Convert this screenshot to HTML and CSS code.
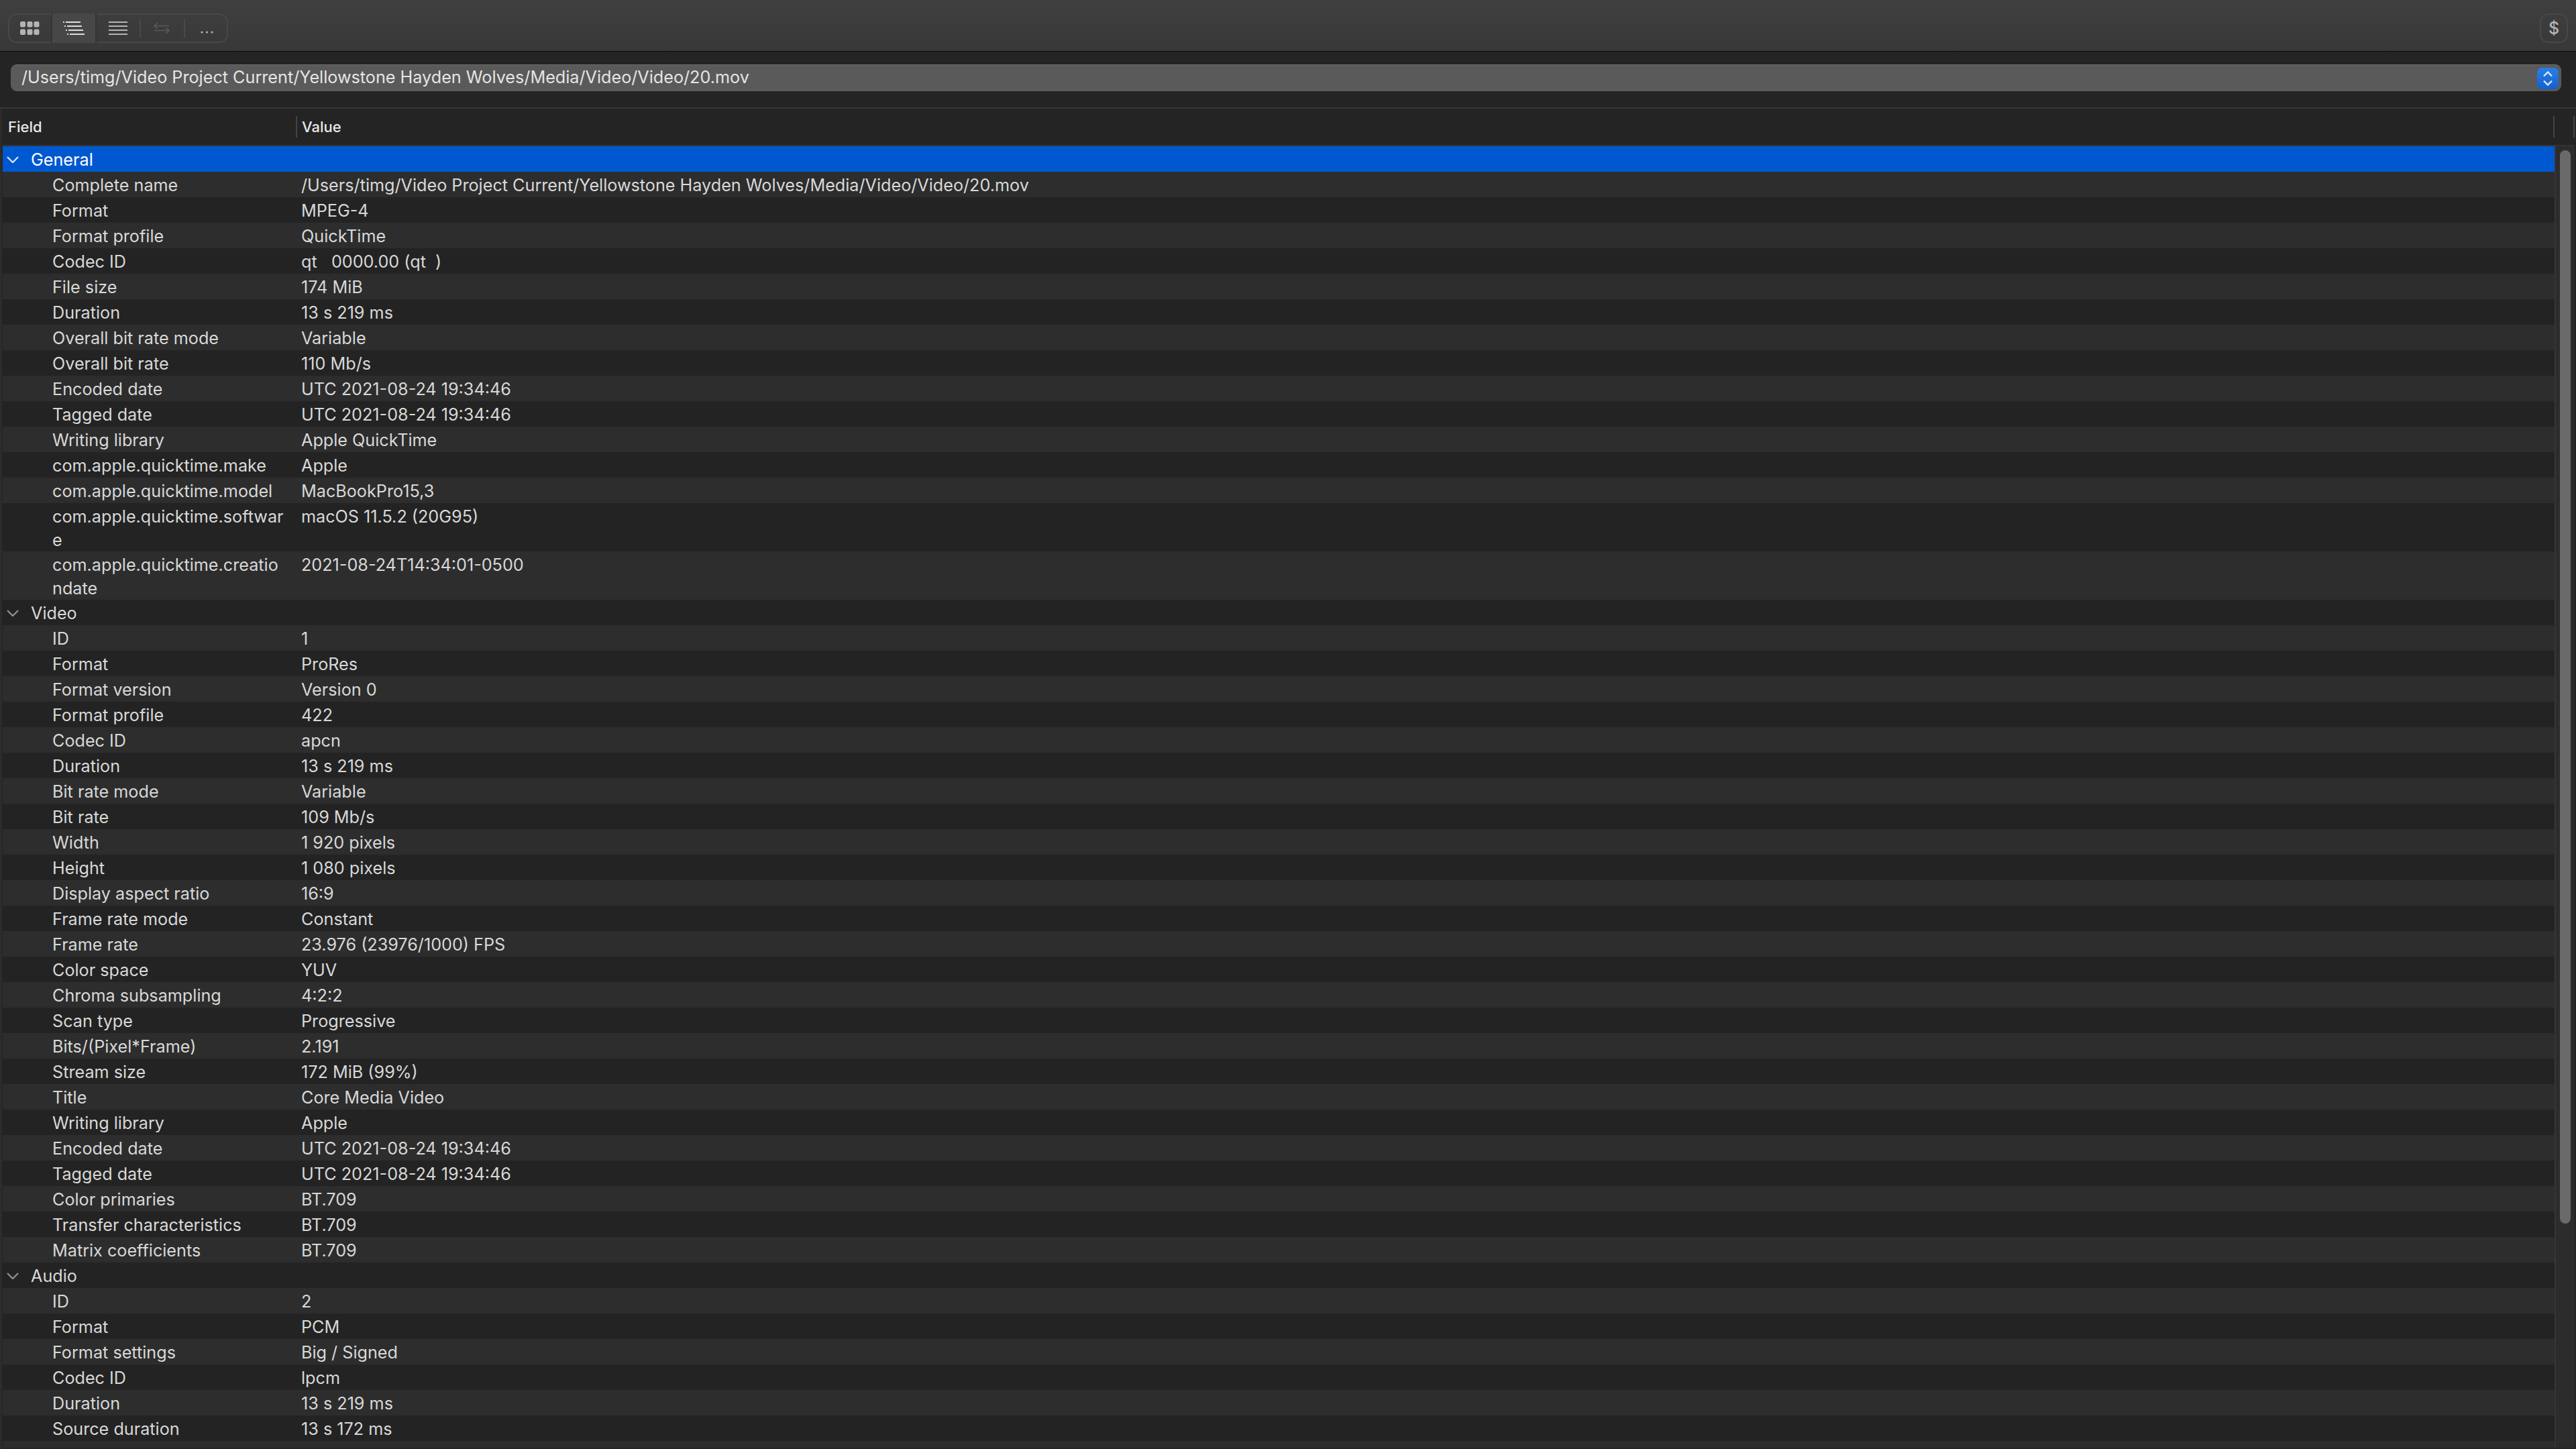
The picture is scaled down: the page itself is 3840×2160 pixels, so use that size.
FILE: index.html
```html
<!DOCTYPE html>
<html lang="en">
<head>
    <meta charset="UTF-8">
    <title>MediaInfo</title>
    <link rel="stylesheet" href="styles.css">
</head>
<body>
    <div class="toolbar">
        <div class="tool-group">
            <div class="tool first">
                <svg width="29" height="20" viewBox="0 0 29 20" fill="#b4b4b4">
                    <rect x="0" y="0" width="8" height="8.5" rx="2"/><rect x="10.500" y="0" width="8" height="8.5" rx="2"/><rect x="20.500" y="0" width="8" height="8.5" rx="2"/>
                    <rect x="0" y="11.500" width="8" height="8.5" rx="2"/><rect x="10.500" y="11.500" width="8" height="8.5" rx="2"/><rect x="20.500" y="11.500" width="8" height="8.5" rx="2"/>
                </svg>
            </div>
            <div class="tool active">
                <svg width="32" height="20" viewBox="0 0 32 20" fill="#dcdcdc">
                    <rect x="0" y="0" width="2" height="2"/><rect x="4" y="0" width="22" height="2"/>
                    <rect x="2" y="6" width="2" height="2"/><rect x="6" y="6" width="22" height="2"/>
                    <rect x="4" y="12" width="2" height="2"/><rect x="8" y="12" width="22" height="2"/>
                    <rect x="6" y="18" width="2" height="2"/><rect x="10" y="18" width="22" height="2"/>
                </svg>
            </div>
            <div class="tool third">
                <svg width="28" height="20" viewBox="0 0 28 20" fill="#b4b4b4">
                    <rect x="0" y="0" width="28" height="2"/><rect x="0" y="6" width="28" height="2"/>
                    <rect x="0" y="12" width="28" height="2"/><rect x="0" y="18" width="28" height="2"/>
                </svg>
            </div>
            <div class="tool divided swap">
                <svg width="24" height="16" viewBox="0 0 24 16" fill="none" stroke="#5a5a5a" stroke-width="1.600">
                    <path d="M23 4.500H1M6 0.500L1 4.500L6 8.500M1 11.500H23M18 7.500L23 11.500L18 15.500"/>
                </svg>
            </div>
            <div class="tool divided more">
                <svg width="20" height="4" viewBox="0 0 20 4" fill="#b4b4b4">
                    <circle cx="2" cy="2" r="1.600"/><circle cx="9.500" cy="2" r="1.600"/><circle cx="17" cy="2" r="1.600"/>
                </svg>
            </div>
        </div>
        <div class="tool-single">$</div>
    </div>

    <div class="path-area">
        <div class="path-select">
            <span class="path-text">/Users/timg/Video Project Current/Yellowstone Hayden Wolves/Media/Video/Video/20.mov</span>
            <div class="path-stepper">
                <svg width="16" height="24" viewBox="0 0 16 24" fill="none" stroke="#d8e8ff" stroke-width="2.400">
                    <path d="M2 8.500L8 2.500L14 8.500M2 15.500L8 21.500L14 15.500"/>
                </svg>
            </div>
        </div>
    </div>

    <div class="panel">
        <div class="table-header">
            <div class="head-field">Field</div>
            <div class="head-value">Value</div>
            <div class="head-end"></div>
        </div>
        <div class="table-body">
            <div class="rows">
                <div class="row group selected"><svg class="chevron" width="18" height="10" viewBox="0 0 18 10"><path d="M1 1L9 9L17 1"/></svg><span>General</span></div>
                <div class="row"><div class="field">Complete name</div><div class="value">/Users/timg/Video Project Current/Yellowstone Hayden Wolves/Media/Video/Video/20.mov</div></div>
                <div class="row"><div class="field">Format</div><div class="value">MPEG-4</div></div>
                <div class="row"><div class="field">Format profile</div><div class="value">QuickTime</div></div>
                <div class="row"><div class="field">Codec ID</div><div class="value">qt &nbsp; 0000.00 (qt &nbsp;)</div></div>
                <div class="row"><div class="field">File size</div><div class="value">174 MiB</div></div>
                <div class="row"><div class="field">Duration</div><div class="value">13 s 219 ms</div></div>
                <div class="row"><div class="field">Overall bit rate mode</div><div class="value">Variable</div></div>
                <div class="row"><div class="field">Overall bit rate</div><div class="value">110 Mb/s</div></div>
                <div class="row"><div class="field">Encoded date</div><div class="value">UTC 2021-08-24 19:34:46</div></div>
                <div class="row"><div class="field">Tagged date</div><div class="value">UTC 2021-08-24 19:34:46</div></div>
                <div class="row"><div class="field">Writing library</div><div class="value">Apple QuickTime</div></div>
                <div class="row"><div class="field">com.apple.quicktime.make</div><div class="value">Apple</div></div>
                <div class="row"><div class="field">com.apple.quicktime.model</div><div class="value">MacBookPro15,3</div></div>
                <div class="row"><div class="field">com.apple.quicktime.software</div><div class="value">macOS 11.5.2 (20G95)</div></div>
                <div class="row"><div class="field">com.apple.quicktime.creationdate</div><div class="value">2021-08-24T14:34:01-0500</div></div>
                <div class="row group"><svg class="chevron" width="18" height="10" viewBox="0 0 18 10"><path d="M1 1L9 9L17 1"/></svg><span>Video</span></div>
                <div class="row"><div class="field">ID</div><div class="value">1</div></div>
                <div class="row"><div class="field">Format</div><div class="value">ProRes</div></div>
                <div class="row"><div class="field">Format version</div><div class="value">Version 0</div></div>
                <div class="row"><div class="field">Format profile</div><div class="value">422</div></div>
                <div class="row"><div class="field">Codec ID</div><div class="value">apcn</div></div>
                <div class="row"><div class="field">Duration</div><div class="value">13 s 219 ms</div></div>
                <div class="row"><div class="field">Bit rate mode</div><div class="value">Variable</div></div>
                <div class="row"><div class="field">Bit rate</div><div class="value">109 Mb/s</div></div>
                <div class="row"><div class="field">Width</div><div class="value">1 920 pixels</div></div>
                <div class="row"><div class="field">Height</div><div class="value">1 080 pixels</div></div>
                <div class="row"><div class="field">Display aspect ratio</div><div class="value">16:9</div></div>
                <div class="row"><div class="field">Frame rate mode</div><div class="value">Constant</div></div>
                <div class="row"><div class="field">Frame rate</div><div class="value">23.976 (23976/1000) FPS</div></div>
                <div class="row"><div class="field">Color space</div><div class="value">YUV</div></div>
                <div class="row"><div class="field">Chroma subsampling</div><div class="value">4:2:2</div></div>
                <div class="row"><div class="field">Scan type</div><div class="value">Progressive</div></div>
                <div class="row"><div class="field">Bits/(Pixel*Frame)</div><div class="value">2.191</div></div>
                <div class="row"><div class="field">Stream size</div><div class="value">172 MiB (99%)</div></div>
                <div class="row"><div class="field">Title</div><div class="value">Core Media Video</div></div>
                <div class="row"><div class="field">Writing library</div><div class="value">Apple</div></div>
                <div class="row"><div class="field">Encoded date</div><div class="value">UTC 2021-08-24 19:34:46</div></div>
                <div class="row"><div class="field">Tagged date</div><div class="value">UTC 2021-08-24 19:34:46</div></div>
                <div class="row"><div class="field">Color primaries</div><div class="value">BT.709</div></div>
                <div class="row"><div class="field">Transfer characteristics</div><div class="value">BT.709</div></div>
                <div class="row"><div class="field">Matrix coefficients</div><div class="value">BT.709</div></div>
                <div class="row group"><svg class="chevron" width="18" height="10" viewBox="0 0 18 10"><path d="M1 1L9 9L17 1"/></svg><span>Audio</span></div>
                <div class="row"><div class="field">ID</div><div class="value">2</div></div>
                <div class="row"><div class="field">Format</div><div class="value">PCM</div></div>
                <div class="row"><div class="field">Format settings</div><div class="value">Big / Signed</div></div>
                <div class="row"><div class="field">Codec ID</div><div class="value">lpcm</div></div>
                <div class="row"><div class="field">Duration</div><div class="value">13 s 219 ms</div></div>
                <div class="row"><div class="field">Source duration</div><div class="value">13 s 172 ms</div></div>
                <div class="row"></div>
            </div>
            <div class="scroll-track">
                <div class="scroll-thumb"></div>
            </div>
        </div>
    </div>
</body>
</html>
```

FILE: styles.css
```css
html, body {
    margin: 0;
    height: 2160px;
    overflow: hidden;
}

body {
    background-color: #242424;
    color: #dcdcdc;
    font-family: Inter, Roboto, "Liberation Sans", sans-serif;
    font-size: 25.200px;
    display: flex;
    flex-direction: column;
}

/* top toolbar */
.toolbar {
    height: 77px;
    box-sizing: border-box;
    flex: none;
    display: flex;
    justify-content: space-between;
    align-items: flex-start;
    padding: 20px 12px 0 12px;
    background: linear-gradient(#3f3f3f, #383838);
    border-bottom: 1px solid #0c0c0c;
}

.tool-group {
    display: flex;
    width: 328px;
    height: 44px;
    box-sizing: border-box;
    border: 2px solid #484848;
    border-radius: 13px;
}

.tool {
    width: 65px;
    box-sizing: border-box;
    flex: none;
    display: flex;
    align-items: center;
    justify-content: center;
    margin-top: -2px;
    height: 44px;
}

.tool.first {
    width: 62px;
    padding-right: 2px;
}

.tool.active {
    width: 68px;
    background-color: #474747;
    border-left: 2px solid #353535;
    border-right: 2px solid #353535;
}

.tool.third {
    width: 64px;
}

.tool.swap {
    width: 66px;
}

.tool.divided {
    position: relative;
}

.tool.divided::before {
    content: "";
    position: absolute;
    left: 0;
    top: 8px;
    height: 28px;
    width: 1.500px;
    background-color: #4a4a4a;
}

.tool.more {
    align-items: flex-end;
    padding-bottom: 14px;
    padding-left: 5px;
}

.tool-single {
    width: 42px;
    height: 44px;
    box-sizing: border-box;
    border: 2px solid #484848;
    border-radius: 13px;
    color: #b4b4b4;
    font-size: 25px;
    font-weight: 500;
    display: flex;
    align-items: center;
    justify-content: center;
}

/* file path select */
.path-area {
    flex: none;
    height: 85px;
    box-sizing: border-box;
    padding: 19px 22px 0 16px;
    border-bottom: 2px solid #363636;
}

.path-select {
    height: 40px;
    border-radius: 9px;
    background-color: #5a5a5a;
    border-top: 1px solid #6e6e6e;
    box-sizing: border-box;
    display: flex;
    align-items: center;
    justify-content: space-between;
    padding: 0 4px 0 16px;
}

.path-text {
    color: #e4e4e4;
    padding-bottom: 3px;
}

.path-stepper {
    width: 32px;
    height: 32px;
    border-radius: 7px;
    background: linear-gradient(#2a7ee8, #1560cc);
    display: flex;
    align-items: center;
    justify-content: center;
}

/* table */
.panel {
    flex: 1;
    min-height: 0;
    padding-left: 4px;
    padding-right: 2px;
    padding-bottom: 2px;
    display: flex;
    flex-direction: column;
    box-shadow: inset 3px 0 0 #2c2c2c;
}

.table-header {
    flex: none;
    height: 56px;
    box-sizing: border-box;
    display: flex;
    align-items: center;
    font-size: 22px;
    font-weight: 500;
    color: #e8e8e8;
    border-bottom: 2px solid #333333;
}

.head-field {
    width: 439px;
    height: 32px;
    box-sizing: border-box;
    padding-left: 8px;
    display: flex;
    align-items: center;
    border-right: 2px solid #444444;
}

.head-value {
    flex: 1;
    height: 32px;
    box-sizing: border-box;
    padding-left: 7px;
    display: flex;
    align-items: center;
    border-right: 2px solid #444444;
}

.head-end {
    width: 30px;
    height: 32px;
    box-sizing: border-box;
    border-right: 2px solid #444444;
}

.table-body {
    flex: 1;
    min-height: 0;
    display: flex;
}

.rows {
    flex: 1;
    min-width: 0;
    overflow: hidden;
}

.row {
    display: grid;
    grid-template-columns: 445px 1fr;
    box-sizing: border-box;
    min-height: 38px;
    padding-top: 3px;
    line-height: 34.500px;
    color: #d8d8d8;
}

.row:nth-child(even) {
    background-color: #2d2d2d;
}

.row:nth-child(odd) {
    background-color: #232323;
}

.row.group {
    display: flex;
    align-items: center;
    padding-left: 42px;
    position: relative;
}

.row.selected {
    background-color: #0058d0;
    color: #ffffff;
}

.chevron {
    position: absolute;
    left: 6px;
    top: 15px;
    fill: none;
    stroke: #8e8e8e;
    stroke-width: 2.400;
}

.selected .chevron {
    stroke: #d4e4fa;
}

.field {
    padding-left: 74px;
    padding-right: 25px;
    word-break: break-all;
}

.value {
    white-space: nowrap;
}

.scroll-track {
    width: 30px;
    flex: none;
    box-sizing: border-box;
    background-color: #2c2c2c;
    border-left: 2px solid #363636;
    padding: 6px 6px 0 6px;
}

.scroll-thumb {
    width: 16px;
    height: 1600px;
    border-radius: 8px;
    background-color: #6a6a6a;
}
```
